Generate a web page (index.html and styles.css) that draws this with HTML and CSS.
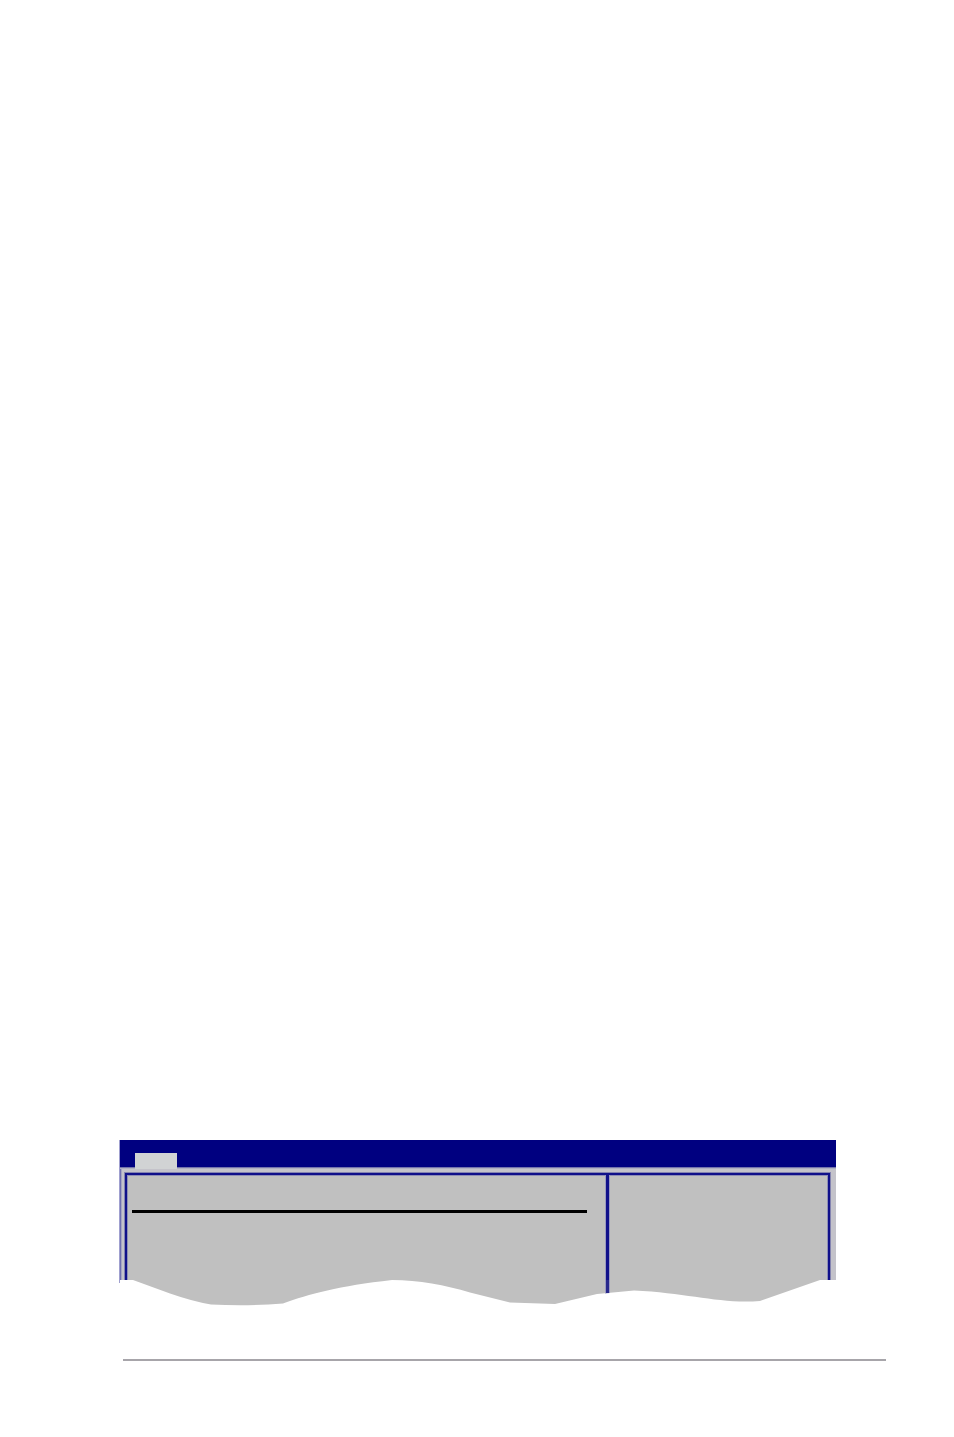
FILE: index.html
```
<!doctype html>
<html lang="en">

<head>
	<meta charset="UTF-8">
	<title>BIOS setup</title>
	<link rel="stylesheet" href="styles.css">
</head>

<body>
	<main class="bios">
		<div class="menu_bar">
			<div class="menu_tab"></div>
		</div>
		<div class="screen">
			<div class="frame">
				<div class="items">
					<hr class="item_line">
				</div>
				<div class="help"></div>
			</div>
		</div>
		<!-- torn bottom edge -->
		<svg class="torn" viewBox="0 0 717 26" preserveAspectRatio="none" aria-hidden="true">
			<path fill="#c0c0c0" d="M14 0L51 13.500Q74 21.500 92 24.500C115 25.500 140 25.500 164 23.500C190 14 220 6 273 0C300 0 326 5 351 12.500L391 22.500L436 24L478 14L515 10.500C570 13 600 24 641 21L701 0Z" />
			<path fill="#9a9abf" d="M486 0h5v13l-5 .5z" />
			<path fill="#28288c" d="M487 0h3v13h-3z" />
			<path fill="#9f9fcf" d="M0 0h1v3H0z" />
		</svg>
	</main>
	<hr class="foot_line">
</body>

</html>
```
FILE: styles.css
```
* {
	box-sizing: border-box;
}

body {
	display: flex;
	flex-direction: column;
	justify-content: flex-end;
	min-height: 100vh;
	margin: 0;
	padding: 0 68px 76px 119px;
	background: #fff;
	font-family: "Liberation Sans", Arial, sans-serif;
}

.bios {
	margin-right: 50px;
}

.menu_bar {
	display: flex;
	align-items: flex-end;
	height: 29px;
	padding-left: 15px;
	border-left: 1px solid #9f9fcf;
	background: linear-gradient(#000080 27px, #7474ac 27px, #7474ac 28px, #b0b0c2 28px);
}

.menu_tab {
	width: 42px;
	height: 16px;
	background: #d1d3d4;
}

.screen {
	height: 111px;
	padding: 4px 6px 0 5px;
	overflow: hidden;
	border-left: 1px solid #9f9fcf;
	background: linear-gradient(to right, #7070b0 1px, #a6a6c2 1px, #a6a6c2 2px, #c4c3ca 2px);
}

.frame {
	display: grid;
	grid-template-columns: 479fr 222fr;
	height: 110px;
	border: 2px solid #10108a;
	border-bottom: 0;
	background: #c0c0c0;
	box-shadow: 0 0 0 1px #8484b0, inset 0 1px #8e8eb6, inset 1px 0 #8e8eb6, inset -1px 0 #8e8eb6;
}

.items {
	padding: 35px 19px 0 5px;
}

.item_line {
	height: 3px;
	margin: 0;
	border: 0;
	background: #000;
}

.help {
	border-left: 3px solid #10108a;
	box-shadow: -1px 0 #9a9abf, inset 1px 0 #9a9abf;
}

.torn {
	display: block;
	width: 100%;
	height: 26px;
}

.foot_line {
	width: calc(100% - 4px);
	height: 2px;
	margin: 53px 0 0 4px;
	border: 0;
	background: #a7a5aa;
}
```
